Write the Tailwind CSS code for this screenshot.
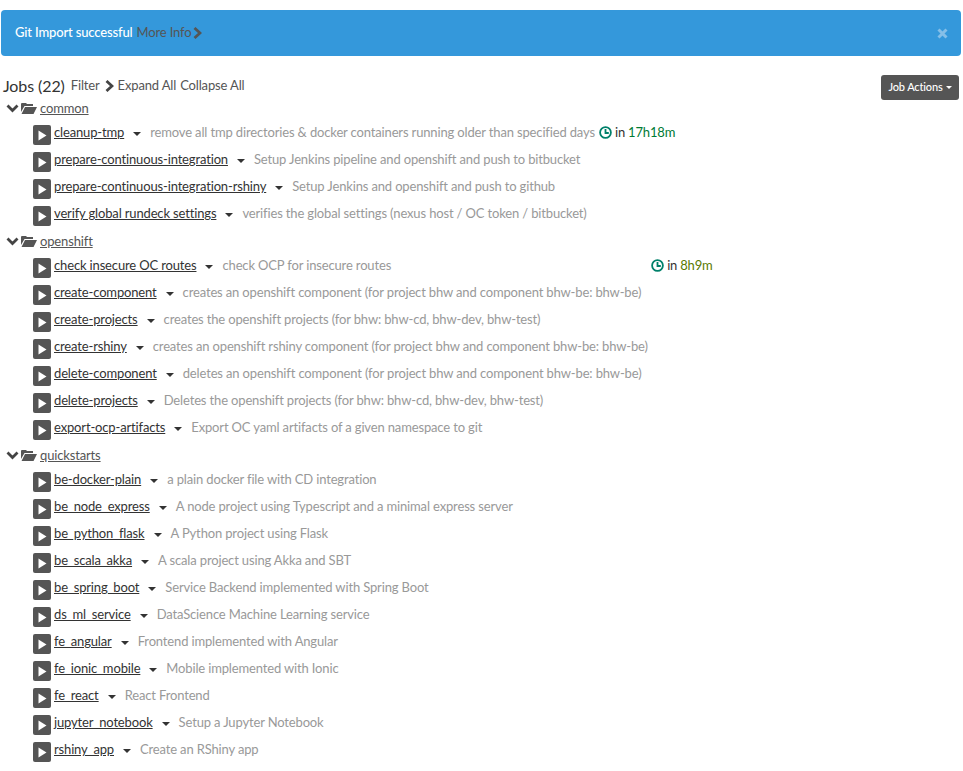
<!DOCTYPE html>
<html lang="en">
<head>
  <meta charset="UTF-8" />
  <title>Jobs</title>
  <script src="https://cdn.jsdelivr.net/npm/@tailwindcss/browser@4"></script>
</head>
<body class="bg-white font-['Lato',sans-serif] text-[13px] tracking-[-0.15px] text-[#333] overflow-hidden h-[771px]">
  <!-- Alert -->
  <div class="mt-[10px] ml-px w-[960px] h-[46px] rounded-[4px] bg-[#3498db] flex items-center pl-[14px] pr-[13px] pb-[1px] text-white">
    <span class="font-medium">Git Import successful</span>
    <span class="ml-[4px] text-[#555]">More Info</span>
    <svg class="ml-[2px]" width="9" height="12" viewBox="0 0 9 12"><path d="M1.5 1 L7 6 L1.5 11" fill="none" stroke="#555" stroke-width="2.8"/></svg>
    <svg class="ml-auto mt-[1px]" width="11" height="11" viewBox="0 0 11 11"><path d="M1.5 1.5 L9.5 9.5 M9.5 1.5 L1.5 9.5" stroke="#85bfe8" stroke-width="3"/></svg>
  </div>

  <!-- Header -->
  <div class="flex items-center mt-[20px] h-[20px] pl-[3px] pr-[4px]">
    <span class="text-[16px] tracking-[-0.1px] text-[#333]">Jobs (22)</span>
    <span class="ml-[6px] text-[#555]">Filter</span>
    <svg class="ml-[5px]" width="9" height="12" viewBox="0 0 9 12"><path d="M1.5 1 L7 6 L1.5 11" fill="none" stroke="#444" stroke-width="2.8"/></svg>
    <span class="ml-[4px] text-[#555]">Expand All</span>
    <span class="ml-[4px] text-[#555]">Collapse All</span>
    <button class="ml-auto h-[25px] w-[78px] mt-[3px] rounded-[3px] bg-[#555] text-white text-[11px] font-medium flex items-center justify-center">Job Actions<span class="ml-[3px] border-x-[3px] border-x-transparent border-t-[3px] border-t-white"></span></button>
  </div>

  <div id="jobs" class="mt-[2px]"></div>

  <script>
    const groups = [
      ["common", [
        ["cleanup-tmp", "remove all tmp directories & docker containers running older than specified days", "17h18m", 0],
        ["prepare-continuous-integration", "Setup Jenkins pipeline and openshift and push to bitbucket"],
        ["prepare-continuous-integration-rshiny", "Setup Jenkins and openshift and push to github"],
        ["verify global rundeck settings", "verifies the global settings (nexus host / OC token / bitbucket)"]
      ]],
      ["openshift", [
        ["check insecure OC routes", "check OCP for insecure routes", "8h9m", 1],
        ["create-component", "creates an openshift component (for project bhw and component bhw-be: bhw-be)"],
        ["create-projects", "creates the openshift projects (for bhw: bhw-cd, bhw-dev, bhw-test)"],
        ["create-rshiny", "creates an openshift rshiny component (for project bhw and component bhw-be: bhw-be)"],
        ["delete-component", "deletes an openshift component (for project bhw and component bhw-be: bhw-be)"],
        ["delete-projects", "Deletes the openshift projects (for bhw: bhw-cd, bhw-dev, bhw-test)"],
        ["export-ocp-artifacts", "Export OC yaml artifacts of a given namespace to git"]
      ]],
      ["quickstarts", [
        ["be-docker-plain", "a plain docker file with CD integration"],
        ["be_node_express", "A node project using Typescript and a minimal express server"],
        ["be_python_flask", "A Python project using Flask"],
        ["be_scala_akka", "A scala project using Akka and SBT"],
        ["be_spring_boot", "Service Backend implemented with Spring Boot"],
        ["ds_ml_service", "DataScience Machine Learning service"],
        ["fe_angular", "Frontend implemented with Angular"],
        ["fe_ionic_mobile", "Mobile implemented with Ionic"],
        ["fe_react", "React Frontend"],
        ["jupyter_notebook", "Setup a Jupyter Notebook"],
        ["rshiny_app", "Create an RShiny app"]
      ]]
    ];

    const esc = s => s.replace(/&/g, "&amp;");

    function schedule(time, late) {
      return `<span class="flex items-center ${late ? "ml-[260px]" : "ml-[4px]"}">
        <svg class="-mt-[1px]" width="13" height="13" viewBox="0 0 13 13" fill="none" stroke="#00806a" stroke-width="1.8"><circle cx="6.5" cy="6.5" r="5.4"/><path d="M6.5 3 V7 H9.8"/></svg>
        <span class="ml-[3px] text-[#333]">in</span>
        <span class="ml-[3px] ${late ? "text-[#5a7a00]" : "text-[#007a33]"}">${time}</span>
      </span>`;
    }

    document.getElementById("jobs").innerHTML = groups.map(([name, jobs]) => `
      <div class="flex items-center h-[20px] pl-[6px]">
        <svg width="13" height="9" viewBox="0 0 13 9"><path d="M1.5 1.5 L6.5 6.5 L11.5 1.5" fill="none" stroke="#444" stroke-width="2.8"/></svg>
        <svg class="ml-[2px]" width="16" height="12" viewBox="0 0 16 12"><path d="M0 2 Q0 1 1 1 H5 L6 2 H12 V4 H3.5 L0 10 Z M4 5 H16 L12.5 12 H0.5 Z" fill="#555"/></svg>
        <a class="ml-[3px] mt-[2px] text-[#555] underline">${name}</a>
      </div>
      <div class="mt-[3px] mb-[2px]">
        ${jobs.map(([job, desc, time, late]) => `
        <div class="flex h-[27px] pl-[33px] pt-[2px]">
          <span class="w-[18px] h-[20px] mt-[2px] rounded-[2px] bg-[#555] flex items-center justify-center">
            <svg width="9" height="11" viewBox="0 0 9 11"><path d="M0.5 0.5 L8.5 5.5 L0.5 10.5 Z" fill="#fff"/></svg>
          </span>
          <div class="flex items-center h-[20px] ml-[3px]">
            <a class="text-[#333] underline">${job}</a>
            <span class="ml-[9px] border-x-[4px] border-x-transparent border-t-[4px] border-t-[#333] mt-[2px]"></span>
            <span class="ml-[9px] text-[#999]">${esc(desc)}</span>
            ${time ? schedule(time, late) : ""}
          </div>
        </div>`).join("")}
      </div>`).join("");
  </script>
</body>
</html>
